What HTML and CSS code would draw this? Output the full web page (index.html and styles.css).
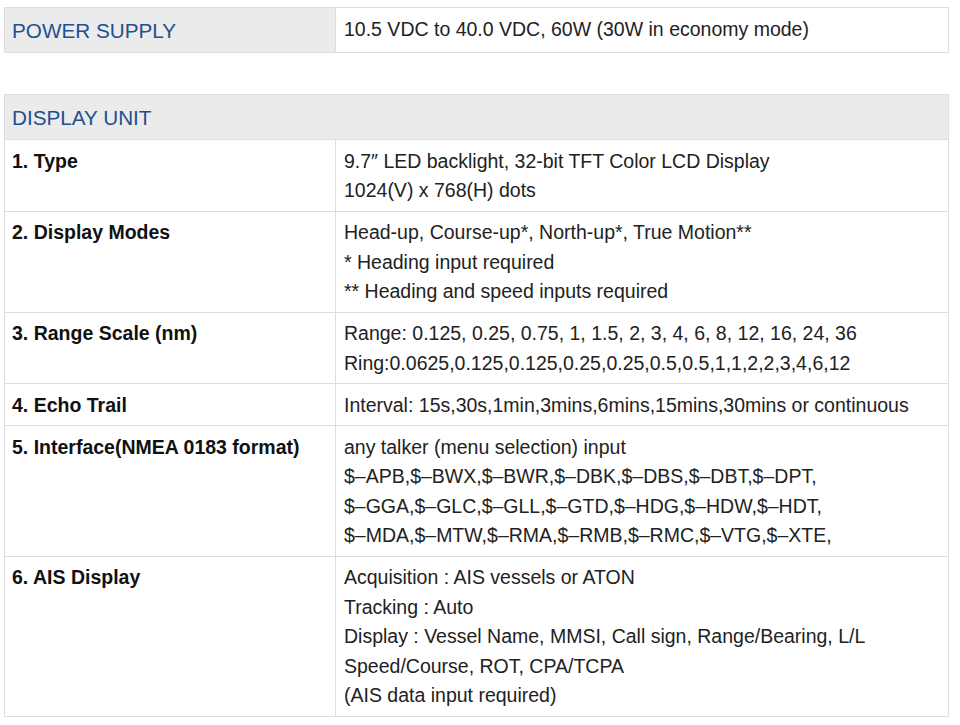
FILE: index.html
```html
<!DOCTYPE html>
<html>
<head>
<meta charset="utf-8">
<link rel="stylesheet" href="styles.css">
</head>
<body>
<div class="page">
  <table class="spec">
    <colgroup><col class="c1"><col class="c2"></colgroup>
    <tr>
      <th class="head">POWER SUPPLY</th>
      <td class="val">10.5 VDC to 40.0 VDC, 60W (30W in economy mode)</td>
    </tr>
  </table>

  <table class="spec second">
    <colgroup><col class="c1"><col class="c2"></colgroup>
    <tr>
      <th class="head" colspan="2">DISPLAY UNIT</th>
    </tr>
    <tr>
      <td class="label">1. Type</td>
      <td class="val">9.7″ LED backlight, 32-bit TFT Color LCD Display<br>1024(V) x 768(H) dots</td>
    </tr>
    <tr>
      <td class="label">2. Display Modes</td>
      <td class="val">Head-up, Course-up*, North-up*, True Motion**<br>* Heading input required<br>** Heading and speed inputs required</td>
    </tr>
    <tr>
      <td class="label">3. Range Scale (nm)</td>
      <td class="val">Range: 0.125, 0.25, 0.75, 1, 1.5, 2, 3, 4, 6, 8, 12, 16, 24, 36<br>Ring:0.0625,0.125,0.125,0.25,0.25,0.5,0.5,1,1,2,2,3,4,6,12</td>
    </tr>
    <tr>
      <td class="label">4. Echo Trail</td>
      <td class="val">Interval: 15s,30s,1min,3mins,6mins,15mins,30mins or continuous</td>
    </tr>
    <tr>
      <td class="label">5. Interface(NMEA 0183 format)</td>
      <td class="val">any talker (menu selection) input<br>$–APB,$–BWX,$–BWR,$–DBK,$–DBS,$–DBT,$–DPT,<br>$–GGA,$–GLC,$–GLL,$–GTD,$–HDG,$–HDW,$–HDT,<br>$–MDA,$–MTW,$–RMA,$–RMB,$–RMC,$–VTG,$–XTE,</td>
    </tr>
    <tr>
      <td class="label">6. AIS Display</td>
      <td class="val">Acquisition : AIS vessels or ATON<br>Tracking : Auto<br>Display : Vessel Name, MMSI, Call sign, Range/Bearing, L/L<br>Speed/Course, ROT, CPA/TCPA<br>(AIS data input required)</td>
    </tr>
  </table>
</div>
</body>
</html>
```

FILE: styles.css
```css
html, body {
  margin: 0;
  padding: 0;
  background: #fff;
}

.page {
  padding: 7px 11px 0 4px;
  font-family: "Liberation Sans", Arial, sans-serif;
}

.spec {
  width: 945px;
  border-collapse: collapse;
  table-layout: fixed;
}

.spec .c1 {
  width: 331px;
}

.second {
  margin-top: 41px;
}

.spec th,
.spec td {
  border: 1px solid #dedede;
  text-align: left;
  vertical-align: top;
  padding: 6.5px 8px 5px;
  white-space: nowrap;
}

.spec th.head {
  background: #ebebeb;
  color: #1f4f8f;
  font-weight: normal;
  font-size: 20.7px;
  line-height: 29px;
  padding: 8px 8px 7px 7px;
}

.spec td.label {
  font-weight: bold;
  font-size: 19.5px;
  line-height: 29.5px;
  color: #111;
  padding-left: 7px;
}

.spec td.val {
  font-size: 19.5px;
  line-height: 29.5px;
  color: #222;
}
```
